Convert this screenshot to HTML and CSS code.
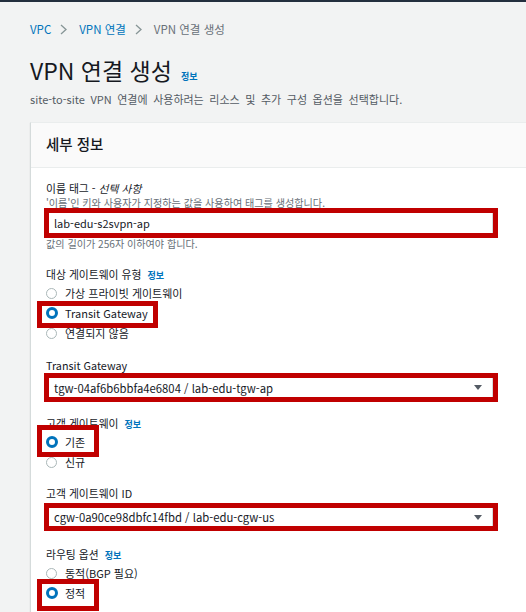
FILE: index.html
```html
<!DOCTYPE html>
<html lang="ko">
<head>
<meta charset="utf-8">
<title>VPN 연결 생성</title>
<link rel="stylesheet" href="styles.css">
</head>
<body>
<div class="topbar"></div>
<div class="page">
  <nav class="crumbs">
    <a class="crumb-link">VPC</a>
    <svg class="chev" viewBox="0 0 7 11" width="7" height="11"><path d="M1 1l5 4.5L1 10" fill="none" stroke="#879596" stroke-width="1.3"/></svg>
    <a class="crumb-link">VPN 연결</a>
    <svg class="chev" viewBox="0 0 7 11" width="7" height="11"><path d="M1 1l5 4.5L1 10" fill="none" stroke="#879596" stroke-width="1.3"/></svg>
    <span class="crumb-current">VPN 연결 생성</span>
  </nav>
  <h1 class="title"><span>VPN 연결 생성</span><span class="info">정보</span></h1>
  <p class="desc">site-to-site VPN 연결에 사용하려는 리소스 및 추가 구성 옵션을 선택합니다.</p>

  <section class="card">
    <header class="card-head">세부 정보</header>
    <div class="card-body">
      <div class="label label-first">이름 태그 - <em>선택 사항</em></div>
      <div class="hint">'이름'인 키와 사용자가 지정하는 값을 사용하여 태그를 생성합니다.</div>
      <div class="box box-input">
        <div class="field field-input">lab-edu-s2svpn-ap</div>
      </div>
      <div class="constraint">값의 길이가 256자 이하여야 합니다.</div>

      <div class="label label-group">대상 게이트웨이 유형 <span class="info-sm">정보</span></div>
      <div class="radios">
        <div class="radio"><span class="dot"></span>가상 프라이빗 게이트웨이</div>
        <div class="radio mark mark-tgw"><span class="dot on"></span>Transit Gateway</div>
        <div class="radio"><span class="dot"></span>연결되지 않음</div>
      </div>

      <div class="label label-select">Transit Gateway</div>
      <div class="box box-select">
        <div class="field field-select">
          <span>tgw-04af6b6bbfa4e6804 / lab-edu-tgw-ap</span>
          <svg class="caret" viewBox="0 0 8 5" width="8" height="5"><path d="M0 0h8L4 5z" fill="#545b64"/></svg>
        </div>
      </div>

      <div class="label label-group2">고객 게이트웨이 <span class="info-sm">정보</span></div>
      <div class="radios">
        <div class="radio mark mark-exist"><span class="dot on"></span>기존</div>
        <div class="radio"><span class="dot"></span>신규</div>
      </div>

      <div class="label label-group2">고객 게이트웨이 ID</div>
      <div class="box box-select2">
        <div class="field field-select2">
          <span>cgw-0a90ce98dbfc14fbd / lab-edu-cgw-us</span>
          <svg class="caret" viewBox="0 0 8 5" width="8" height="5"><path d="M0 0h8L4 5z" fill="#545b64"/></svg>
        </div>
      </div>

      <div class="label label-group3">라우팅 옵션 <span class="info-sm">정보</span></div>
      <div class="radios">
        <div class="radio"><span class="dot"></span>동적(BGP 필요)</div>
        <div class="radio mark mark-static"><span class="dot on"></span>정적</div>
      </div>
      <div class="spacer"></div>
    </div>
  </section>
</div>
</body>
</html>
```

FILE: styles.css
```css
html, body {
  overflow: hidden;
}
body {
  margin: 0;
  background: #f2f3f3;
  font-family: "Noto Sans CJK KR", "Noto Sans", sans-serif;
  color: #16191f;
}
.topbar {
  height: 2px;
  background: #232f3e;
}
.page {
  padding: 18px 0 0 30px;
}
.crumbs {
  display: flex;
  align-items: center;
  height: 18px;
  font-size: 11.5px;
  line-height: 18px;
}
.crumb-link {
  color: #0073bb;
}
.chev {
  margin: 0 12px 0 9px;
}
.crumb-current {
  color: #687078;
}
.title {
  display: flex;
  align-items: baseline;
  gap: 9px;
  height: 32px;
  margin: 16px 0 0;
  font-size: 23px;
  line-height: 32px;
  font-weight: 400;
  color: #16191f;
}
.info {
  font-size: 9px;
  font-weight: 700;
  color: #0073bb;
}
.desc {
  height: 18px;
  margin: 4px 0 0;
  font-size: 11px;
  line-height: 18px;
  color: #545b64;
  word-spacing: 2.5px;
  white-space: nowrap;
}
.card {
  margin-top: 14px;
  width: 560px;
  background: #fff;
  border-top: 1px solid #eaeded;
  border-left: 1px solid #d5dbdb;
  box-shadow: 0 1px 1px rgba(0, 28, 36, 0.15);
}
.card-head {
  height: 44px;
  line-height: 42px;
  padding-left: 15px;
  background: #fafafa;
  border-bottom: 1px solid #eaeded;
  font-size: 14.5px;
  font-weight: 500;
  color: #16191f;
}
.card-body {
  padding: 11px 0 0 15px;
}
.label {
  height: 18px;
  font-size: 10.8px;
  line-height: 18px;
  color: #16191f;
}
.label-first {
  height: 16px;
  line-height: 16px;
  margin-top: 1px;
}
.label em {
  font-style: italic;
}
.label-group { margin-top: 15px; }
.label-select { margin-top: 13px; }
.label-group2 { margin-top: 12px; }
.label-group3 { margin-top: 14px; }
.info-sm {
  font-size: 9px;
  font-weight: 700;
  color: #0073bb;
  margin-left: 3px;
}
.hint {
  height: 13px;
  font-size: 10.1px;
  line-height: 13px;
  color: #687078;
  white-space: nowrap;
}
.constraint {
  height: 12px;
  font-size: 10.1px;
  line-height: 12px;
  color: #687078;
}
.box {
  width: 454px;
  margin-left: -2px;
  border: 5px solid #c00000;
  box-sizing: border-box;
  background: #fff;
}
.box-input { margin-top: -1px; }
.box-select { margin-top: -1px; }
.box-select2 { margin-top: 1px; }
.field {
  display: flex;
  align-items: center;
  justify-content: space-between;
  padding: 0 10px 0 5px;
  border-right: 1px solid #d5dbdb;
  color: #16191f;
  white-space: nowrap;
}
.field-input { height: 20px; font-size: 11px; }
.field-select { height: 19px; font-size: 11.3px; }
.field-select2 { height: 18px; font-size: 11.3px; }
.caret {
  flex: none;
}
.radios {
  display: flex;
  flex-direction: column;
  align-items: flex-start;
}
.radio {
  display: flex;
  align-items: center;
  height: 20px;
  font-size: 11px;
  color: #16191f;
}
.dot {
  width: 11px;
  height: 11px;
  margin: 0 8px 0 0;
  border: 1px solid #aab7b8;
  border-radius: 50%;
  box-sizing: border-box;
  background: #fff;
}
.dot.on {
  width: 12px;
  height: 12px;
  margin-right: 7px;
  border: 3.5px solid #0073bb;
}
.mark {
  position: relative;
}
.mark::after {
  content: "";
  position: absolute;
  left: -9px;
  border: 5px solid #c00000;
  box-sizing: border-box;
}
.mark-tgw::after { top: -2px; width: 121px; height: 27px; }
.mark-exist::after { top: -7px; width: 62px; height: 32px; }
.mark-static::after { top: -4px; width: 62px; height: 32px; }
.spacer { height: 40px; }
```
